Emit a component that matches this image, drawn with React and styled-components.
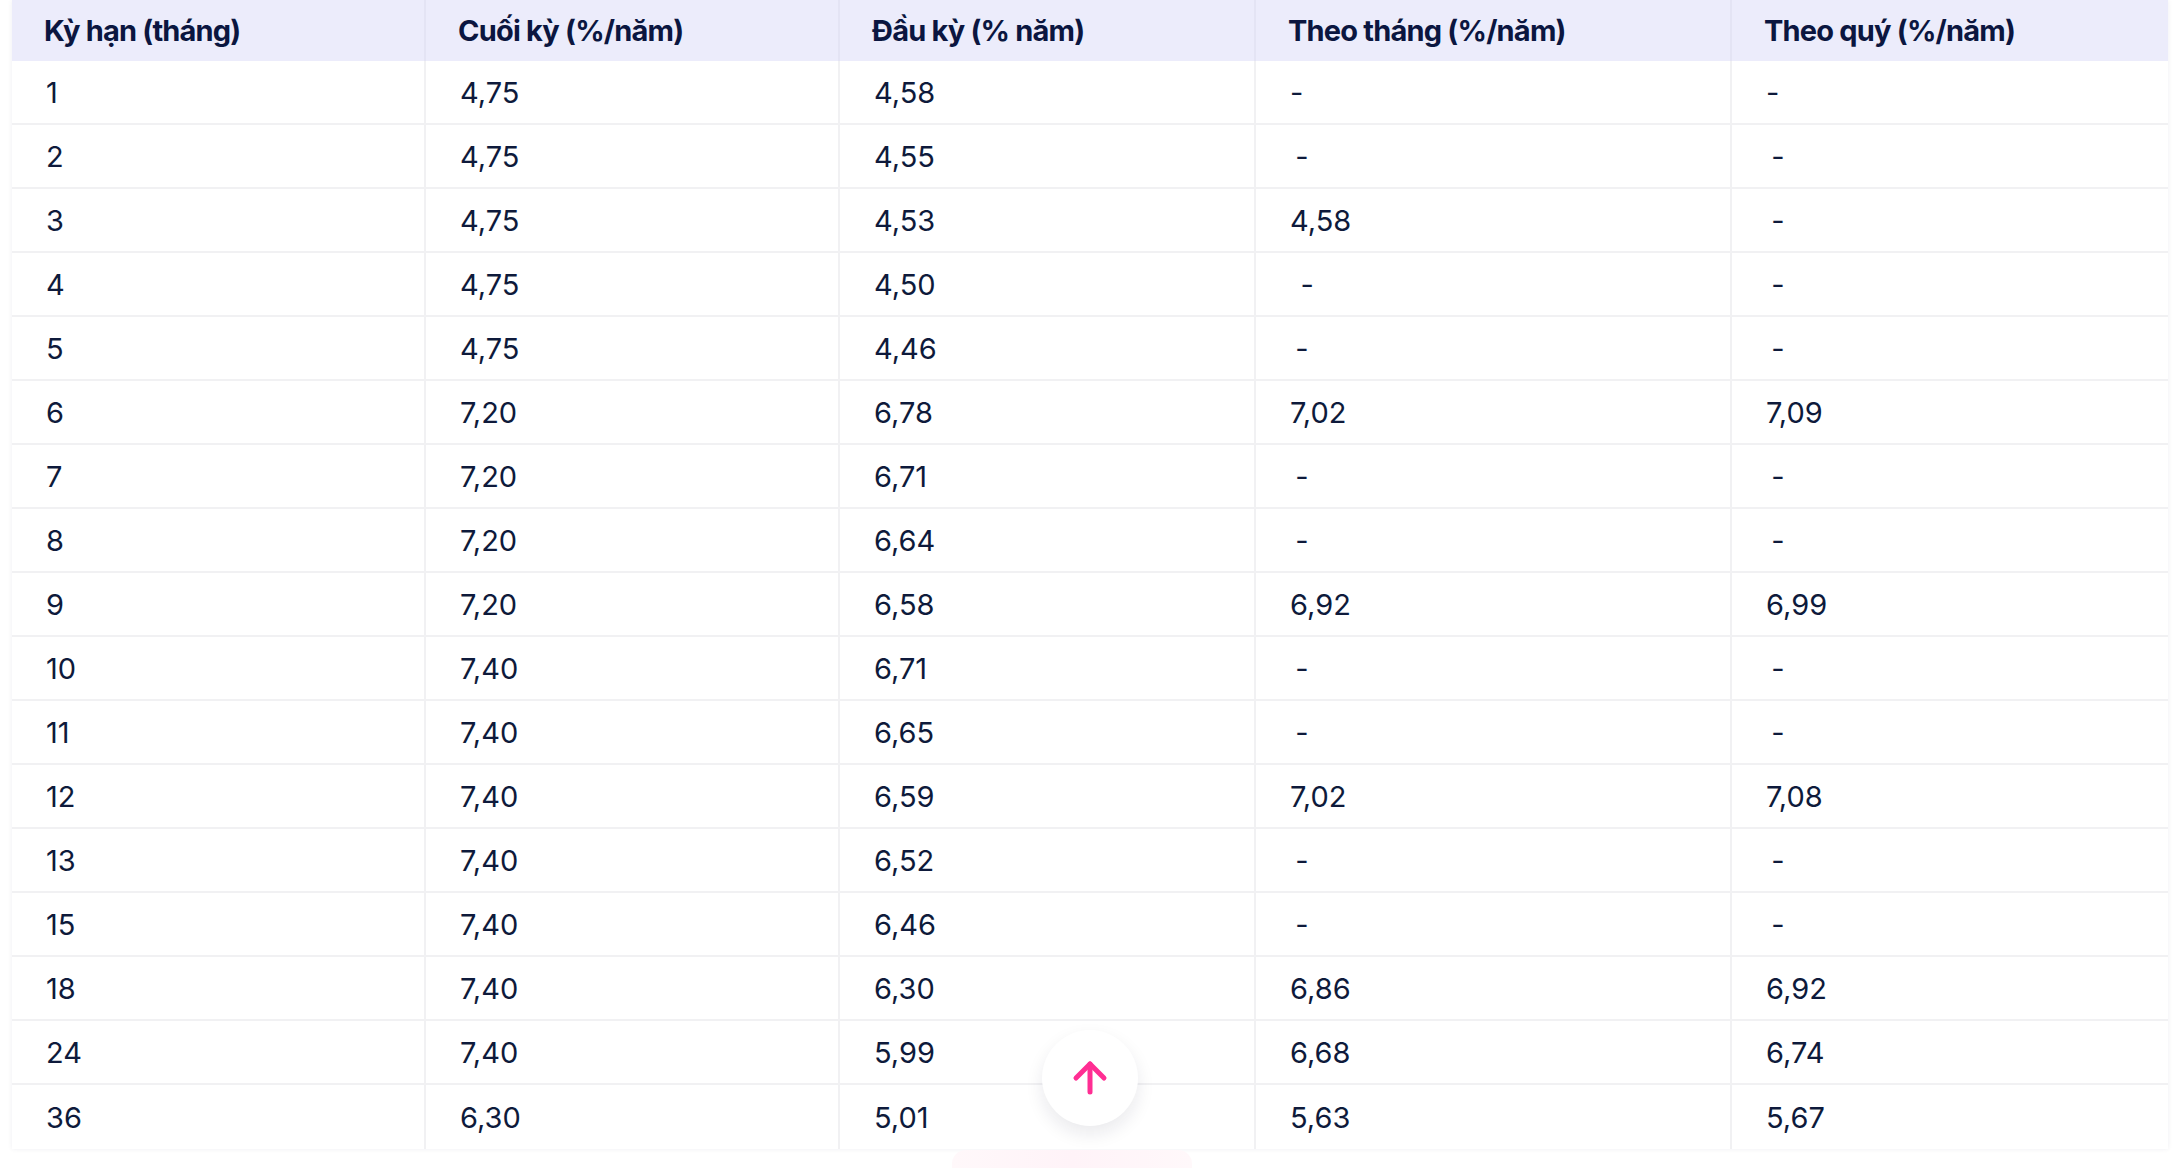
import React from 'react'
import styled, { createGlobalStyle } from 'styled-components'
import { ArrowUp } from 'lucide-react'

const GlobalStyle = createGlobalStyle`
  html, body {
    margin: 0;
    padding: 0;
    background: #ffffff;
  }
  body {
    font-family: Inter, "Noto Sans", "Liberation Sans", sans-serif;
    color: #0e1a3b;
    -webkit-font-smoothing: antialiased;
  }
`

const COLUMNS = '414px 414px 416px 476px 1fr'

const Page = styled.div`
  position: relative;
  height: 1168px;
  overflow: hidden;
  padding: 0 10px 0 12px;
`

const RateTable = styled.div`
  box-shadow: 0 0 5px rgba(20, 30, 70, 0.07);
`

const HeadRow = styled.div`
  display: grid;
  grid-template-columns: ${COLUMNS};
  height: 61px;
  background: #ececfb;
`

const HeadCell = styled.div`
  display: flex;
  align-items: center;
  padding-left: 32px;
  font-size: 29px;
  font-weight: 700;
  letter-spacing: -0.8px;
  color: #0b1640;
  border-right: ${p => (p.$last ? 'none' : '2px solid #e4e4f4')};
  white-space: nowrap;
`

const Row = styled.div`
  display: grid;
  grid-template-columns: ${COLUMNS};
  height: 64px;
  box-sizing: border-box;
  border-bottom: ${p => (p.$last ? 'none' : '2px solid #f1f1f3')};
`

const Cell = styled.div`
  display: flex;
  align-items: center;
  padding-left: 34px;
  font-size: 29px;
  font-weight: 400;
  white-space: pre;
  border-right: ${p => (p.$last ? 'none' : '2px solid #f1f1f3')};
`

const TopButton = styled.button`
  position: absolute;
  left: 1042px;
  top: 1030px;
  width: 96px;
  height: 96px;
  border: none;
  border-radius: 50%;
  background: #ffffff;
  box-shadow: 0 8px 18px rgba(20, 20, 60, 0.09);
  display: flex;
  align-items: center;
  justify-content: center;
  padding: 0;
  color: #ff2e93;
  cursor: pointer;
`

const PinkTab = styled.div`
  position: absolute;
  left: 952px;
  top: 1150px;
  width: 240px;
  height: 30px;
  border-radius: 14px 14px 0 0;
  background: linear-gradient(90deg, #fff8fa, #fff3f8 50%, #fff8fa);
`

const headers = [
  'Kỳ hạn (tháng)',
  'Cuối kỳ (%/năm)',
  'Đầu kỳ (% năm)',
  'Theo tháng (%/năm)',
  'Theo quý (%/năm)',
]

const T = '\u2009'

const rows = [
  ['1', '4,75', '4,58', '-', '-'],
  ['2', '4,75', '4,55', T + '-', T + '-'],
  ['3', '4,75', '4,53', '4,58', T + '-'],
  ['4', '4,75', '4,50', T + T + '-', T + '-'],
  ['5', '4,75', '4,46', T + '-', T + '-'],
  ['6', '7,20', '6,78', '7,02', '7,09'],
  ['7', '7,20', '6,71', T + '-', T + '-'],
  ['8', '7,20', '6,64', T + '-', T + '-'],
  ['9', '7,20', '6,58', '6,92', '6,99'],
  ['10', '7,40', '6,71', T + '-', T + '-'],
  ['11', '7,40', '6,65', T + '-', T + '-'],
  ['12', '7,40', '6,59', '7,02', '7,08'],
  ['13', '7,40', '6,52', T + '-', T + '-'],
  ['15', '7,40', '6,46', T + '-', T + '-'],
  ['18', '7,40', '6,30', '6,86', '6,92'],
  ['24', '7,40', '5,99', '6,68', '6,74'],
  ['36', '6,30', '5,01', '5,63', '5,67'],
]

export default function App() {
  return (
    <Page>
      <GlobalStyle />
      <RateTable>
        <HeadRow>
          {headers.map((h, i) => (
            <HeadCell key={h} $last={i === headers.length - 1}>{h}</HeadCell>
          ))}
        </HeadRow>
        {rows.map((r, ri) => (
          <Row key={r[0]} $last={ri === rows.length - 1}>
            {r.map((v, ci) => (
              <Cell key={ci} $last={ci === r.length - 1}>{v}</Cell>
            ))}
          </Row>
        ))}
      </RateTable>
      <PinkTab />
      <TopButton aria-label="Lên đầu trang">
        <ArrowUp size={48} strokeWidth={2.5} />
      </TopButton>
    </Page>
  )
}
